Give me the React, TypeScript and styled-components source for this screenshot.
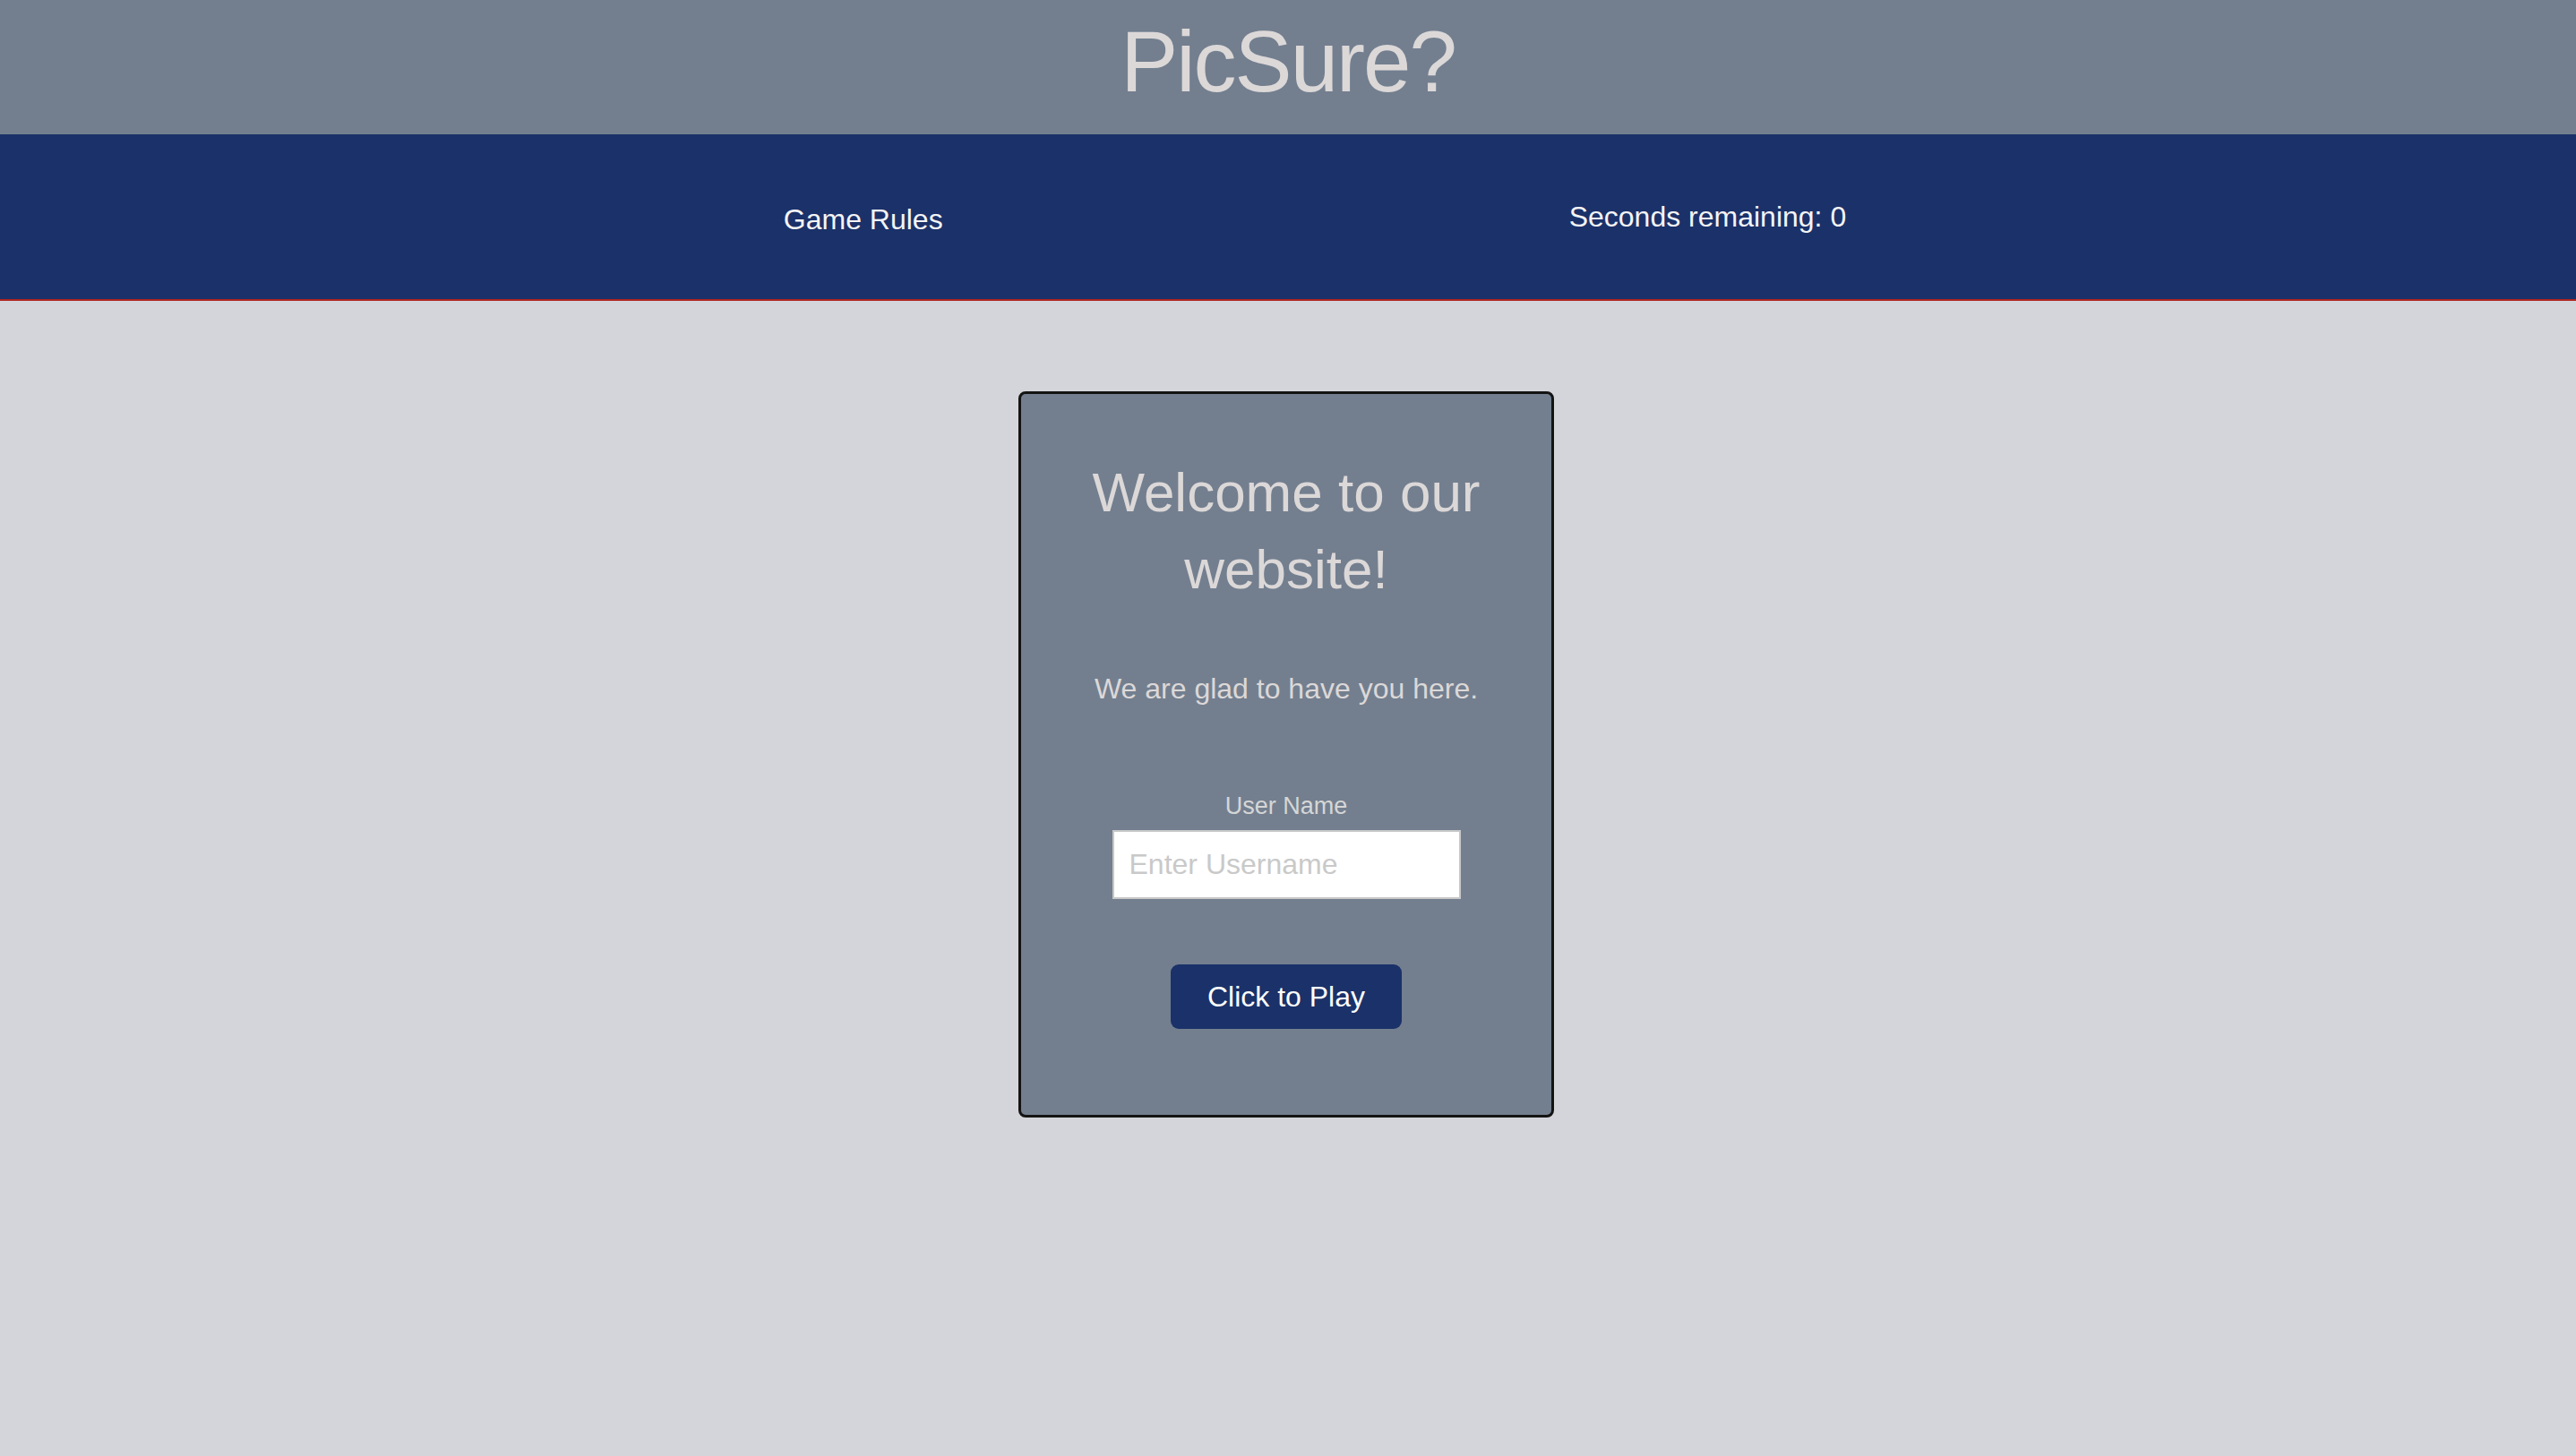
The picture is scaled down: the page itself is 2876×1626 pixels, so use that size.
import React from "react";
import styled, { createGlobalStyle } from "styled-components";

const GlobalStyle = createGlobalStyle`
  html, body {
    margin: 0;
    padding: 0;
    background: #d4d5da;
  }
  body {
    font-family: "Liberation Sans", Arial, Helvetica, sans-serif;
  }
  * { box-sizing: border-box; }
`;

const Page = styled.div`
  min-height: 100vh;
  background: #d4d5da;
  display: flex;
  flex-direction: column;
`;

const Header = styled.header`
  height: 150px;
  background: #737f8f;
  display: flex;
  justify-content: center;
  align-items: flex-start;
  padding-top: 21px;
`;

const Title = styled.h1`
  margin: 0;
  font-size: 96px;
  line-height: 96px;
  font-weight: 400;
  letter-spacing: -2px;
  color: #dcd8d8;
`;

const Nav = styled.nav`
  height: 186px;
  background: #1b3169;
  border-bottom: 2px solid #b02420;
  display: flex;
  justify-content: center;
  align-items: center;
  gap: 699px;
  padding-left: 60px;
`;

const NavLink = styled.span<{ $offset?: number }>`
  font-size: 32px;
  color: #f4f4f6;
  margin-top: ${(p) => p.$offset ?? 0}px;
  cursor: pointer;
`;

const Main = styled.main`
  display: flex;
  justify-content: center;
  padding-top: 101px;
  padding-right: 4px;
`;

const Card = styled.section`
  width: 598px;
  height: 811px;
  background: #737f8f;
  border: 3px solid #141414;
  border-radius: 8px;
  display: flex;
  flex-direction: column;
  align-items: center;
  padding-top: 67px;
  text-align: center;
`;

const Heading = styled.h2`
  margin: 0;
  width: 520px;
  font-size: 62px;
  line-height: 86px;
  font-weight: 400;
  color: #dcd8d8;
`;

const Lead = styled.p`
  margin: 72px 0 0;
  font-size: 32px;
  color: #dcd8d8;
`;

const Field = styled.label`
  margin-top: 97px;
  display: flex;
  flex-direction: column;
  align-items: center;
  gap: 11px;
`;

const FieldLabel = styled.span`
  font-size: 27px;
  line-height: 31px;
  color: #d6d6d6;
`;

const Input = styled.input`
  width: 389px;
  height: 77px;
  border: 2px solid #c8c8c8;
  background: #ffffff;
  padding: 0 17px;
  font-family: "Liberation Sans", Arial, Helvetica, sans-serif;
  font-size: 32px;
  color: #333;
  outline: none;
  &::placeholder {
    color: #c9c9c9;
  }
`;

const PlayButton = styled.button`
  margin-top: 73px;
  width: 258px;
  height: 72px;
  background: #1b3169;
  color: #ffffff;
  border: none;
  border-radius: 9px;
  font-family: "Liberation Sans", Arial, Helvetica, sans-serif;
  font-size: 32px;
  cursor: pointer;
`;

export default function App() {
  return (
    <>
      <GlobalStyle />
      <Page>
        <Header>
          <Title>PicSure?</Title>
        </Header>
        <Nav>
          <NavLink $offset={6}>Game Rules</NavLink>
          <NavLink>Seconds remaining: 0</NavLink>
        </Nav>
        <Main>
          <Card>
            <Heading>Welcome to our website!</Heading>
            <Lead>We are glad to have you here.</Lead>
            <Field>
              <FieldLabel>User Name</FieldLabel>
              <Input type="text" placeholder="Enter Username" />
            </Field>
            <PlayButton>Click to Play</PlayButton>
          </Card>
        </Main>
      </Page>
    </>
  );
}
